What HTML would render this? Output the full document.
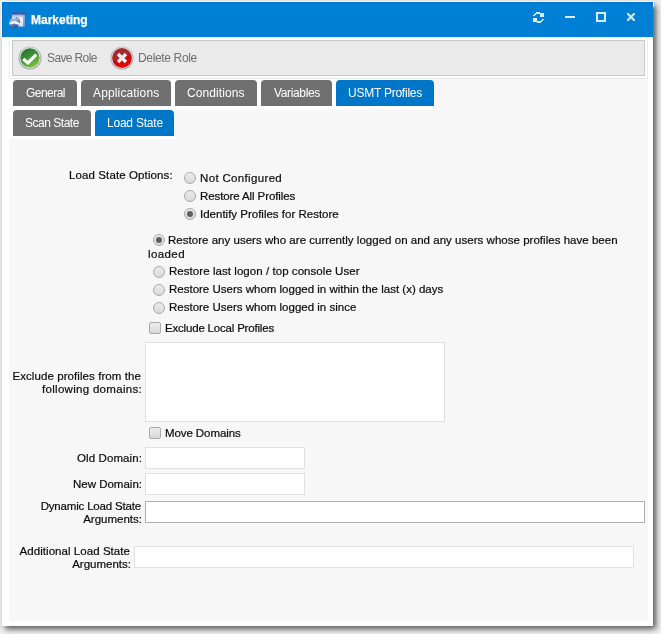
<!DOCTYPE html>
<html><head><meta charset="utf-8">
<style>
*{margin:0;padding:0;box-sizing:border-box}
html,body{width:661px;height:634px;overflow:hidden;background:#f0f0f0}
body{position:relative;font-family:"Liberation Sans",sans-serif;font-size:11.5px;color:#0a0a0a}
.a{position:absolute}
.t{position:absolute;white-space:nowrap;line-height:13px;will-change:transform;-webkit-text-stroke:0.2px #0a0a0a}
.r{text-align:right}
#win{left:2px;top:2px;width:651px;height:624px;background:#fff;box-shadow:3px 3px 6px rgba(0,0,0,0.65)}
#title{left:2px;top:2px;width:651px;height:35px;background:#0080d5;border-top:1px solid #0074cc;border-left:1px solid #0074cc}
#shr{left:653px;top:6px;width:8px;height:628px;background:linear-gradient(to right,#6c6c6c,#8c8c8c 14%,#b4b4b4 45%,#dedede 80%,#ececec)}
#shb{left:6px;top:626px;width:655px;height:8px;background:linear-gradient(to bottom,#6c6c6c,#8c8c8c 14%,#b4b4b4 45%,#dedede 80%,#ececec)}
#frame{left:9px;top:37px;width:639px;height:42px;border:1px solid #ececec;border-bottom-color:#e6e6e6;background:#fff}
#tb{left:12px;top:40px;width:633px;height:36px;border:1px solid #c8c8c8;background:#eaeaea}
#panel{left:9px;top:79px;width:639px;height:542px;background:#f7f7f7}
.tab{position:absolute;height:26px;background:#707070;color:#fff;border-radius:4px 4px 0 0;text-align:center;line-height:27px;font-size:12px;letter-spacing:-0.35px}
.tab.on{background:#0076c8}
.tab span{display:inline-block;will-change:transform}
.wb{position:absolute;background:#fff}
.radio{position:absolute;width:12px;height:12px;border-radius:50%;border:1px solid #a9a9a9;background:linear-gradient(#ececec,#d9d9d9)}
.radio.on::after{content:"";position:absolute;left:2px;top:2px;width:6px;height:6px;border-radius:50%;background:#5e5e5e}
.cb{position:absolute;width:12px;height:12px;border-radius:2px;border:1px solid #a9a9a9;background:linear-gradient(#ededed,#d9d9d9)}
.inp{position:absolute;background:#fff;border:1px solid #e0e0e0}
.tbt{position:absolute;will-change:transform;white-space:nowrap;font-size:12px;letter-spacing:-0.5px;color:#6e6e6e;line-height:13px}
</style></head><body>
<div id="win" class="a"></div>
<div id="title" class="a"></div>
<div class="a" style="left:1px;top:1px;width:653px;height:1px;background:#fbf5ef"></div>
<div class="a" style="left:1px;top:1px;width:1px;height:36px;background:#fbf5ef"></div>
<div class="a" style="left:653px;top:1px;width:1px;height:6px;background:#fbf5ef"></div>
<div class="a" style="left:1px;top:37px;width:1px;height:589px;background:#dcdcdc"></div>
<!-- title icon -->
<svg class="a" style="left:9px;top:11px" width="17" height="17" viewBox="0 0 17 17">
  <defs>
    <linearGradient id="disc" x1="0.2" y1="0" x2="0.5" y2="1"><stop offset="0" stop-color="#c4d4f0"/><stop offset="0.5" stop-color="#7c98d8"/><stop offset="1" stop-color="#30509c"/></linearGradient>
    <linearGradient id="boxg" x1="0" y1="0" x2="0" y2="1"><stop offset="0" stop-color="#3c5aa8"/><stop offset="0.12" stop-color="#3c5aa8"/><stop offset="0.22" stop-color="#a8bce4"/><stop offset="0.45" stop-color="#f2f2f4"/><stop offset="1" stop-color="#dfe3ea"/></linearGradient>
    <linearGradient id="sideg" x1="0" y1="0" x2="0" y2="1"><stop offset="0" stop-color="#2e4c98"/><stop offset="0.3" stop-color="#8aa4d8"/><stop offset="1" stop-color="#5a7cc4"/></linearGradient>
  </defs>
  <rect x="3" y="1.3" width="12.7" height="14.2" fill="url(#boxg)"/>
  <rect x="14.2" y="1.3" width="1.5" height="14.2" fill="url(#sideg)"/>
  <circle cx="5.6" cy="11.6" r="5.2" fill="url(#disc)"/>
  <path d="M0.5 11.4 L5.8 9.8 L10.8 12.1 L10.3 13.9 L5.4 12.6 L0.7 13.5z" fill="#f2f5fc"/>
  <path d="M6.8 6.5 A5.2 5.2 0 0 1 10.8 11.8" stroke="#606060" stroke-width="0.9" fill="none"/>
</svg>
<div class="t" style="left:31px;top:14px;color:#fff;font-weight:bold;font-size:12px;-webkit-text-stroke:0.25px #fff">Marketing</div>
<!-- title buttons -->
<svg class="a" style="left:533px;top:12px" width="11" height="11" viewBox="0 0 11 11" shape-rendering="crispEdges" fill="#d8ecfa">
  <rect x="3" y="0" width="4" height="2"/>
  <rect x="2" y="1" width="2" height="1"/>
  <rect x="1" y="2" width="2" height="1"/>
  <rect x="0" y="3" width="2" height="1"/>
  <rect x="7" y="1" width="4" height="4"/>
  <rect x="0" y="6" width="4" height="4"/>
  <rect x="4" y="9" width="4" height="2"/>
  <rect x="7" y="9" width="2" height="1"/>
  <rect x="8" y="8" width="2" height="1"/>
  <rect x="9" y="7" width="2" height="1"/>
</svg>
<div class="a" style="left:565px;top:16px;width:10px;height:2px;background:#d8ecfa"></div>
<div class="a" style="left:596px;top:12px;width:10px;height:10px;border:2px solid #d8ecfa"></div>
<svg class="a" style="left:627px;top:13px" width="8" height="8" viewBox="0 0 8 8">
  <path d="M0.8 0.8 L7.2 7.2 M7.2 0.8 L0.8 7.2" stroke="#d8ecfa" stroke-width="2" stroke-linecap="square"/>
</svg>

<div id="frame" class="a"></div>
<div id="tb" class="a"></div>
<!-- save icon -->
<svg class="a" style="left:18px;top:46px" width="24" height="24" viewBox="0 0 24 24">
  <defs>
    <linearGradient id="g1" x1="0.2" y1="0" x2="0.8" y2="1"><stop offset="0" stop-color="#236e2c"/><stop offset="0.5" stop-color="#3f9a35"/><stop offset="1" stop-color="#8fca42"/></linearGradient>
    <linearGradient id="r1" x1="0.2" y1="0" x2="0.6" y2="1"><stop offset="0" stop-color="#9c2e2e"/><stop offset="0.5" stop-color="#b02424"/><stop offset="0.56" stop-color="#c40c0c"/><stop offset="1" stop-color="#f40404"/></linearGradient>
    <linearGradient id="ring" x1="0" y1="0" x2="0" y2="1"><stop offset="0" stop-color="#c4c4c8"/><stop offset="1" stop-color="#a6a6ac"/></linearGradient>
  </defs>
  <circle cx="12" cy="12" r="11.6" fill="url(#ring)"/>
  <circle cx="12" cy="12" r="10.4" fill="#ececec"/>
  <circle cx="12" cy="12" r="9.7" fill="url(#g1)"/>
  <path d="M5.2 13 L9.9 16.8 L18.3 8.6" stroke="#fff" stroke-width="3.2" fill="none" stroke-linejoin="miter"/>
</svg>
<div class="tbt" id="s1" style="left:47px;top:52px;letter-spacing:-0.625px">Save Role</div>
<svg class="a" style="left:110px;top:46px" width="24" height="24" viewBox="0 0 24 24">
  <circle cx="12" cy="12" r="11.6" fill="url(#ring)"/>
  <circle cx="12" cy="12" r="10.5" fill="#f0f0f0"/>
  <circle cx="12" cy="12" r="9.9" fill="url(#r1)"/>
  <path d="M9.2 9.2 L14.8 14.8 M14.8 9.2 L9.2 14.8" stroke="#eeeeee" stroke-width="3.4" stroke-linecap="square"/>
</svg>
<div class="tbt" id="s2" style="left:138px;top:52px;letter-spacing:-0.35px">Delete Role</div>

<div id="panel" class="a"></div>
<!-- tabs row 1 -->
<div class="wb" style="left:9px;top:79px;width:68px;height:30px"></div>
<div class="wb" style="left:77px;top:79px;width:94px;height:30px"></div>
<div class="wb" style="left:171px;top:79px;width:86px;height:30px"></div>
<div class="wb" style="left:257px;top:79px;width:75px;height:30px"></div>
<div class="wb" style="left:332px;top:79px;width:102px;height:30px"></div>
<div class="wb" style="left:9px;top:109px;width:82px;height:30px"></div>
<div class="wb" style="left:91px;top:109px;width:83px;height:30px"></div>
<div class="tab" style="left:13px;top:80px;width:64px"><span style="letter-spacing:-0.53px">General</span></div>
<div class="tab" style="left:81px;top:80px;width:90px"><span style="letter-spacing:0.14px">Applications</span></div>
<div class="tab" style="left:175px;top:80px;width:82px"><span style="letter-spacing:0.09px">Conditions</span></div>
<div class="tab" style="left:261px;top:80px;width:71px"><span>Variables</span></div>
<div class="tab on" style="left:336px;top:80px;width:98px"><span style="letter-spacing:-0.24px">USMT Profiles</span></div>
<div class="tab" style="left:13px;top:110px;width:78px"><span style="letter-spacing:-0.48px">Scan State</span></div>
<div class="tab on" style="left:95px;top:110px;width:79px"><span style="letter-spacing:-0.22px">Load State</span></div>

<!-- form -->
<div class="t" id="l1" style="left:69px;top:169px;letter-spacing:0.11px">Load State Options:</div>
<div class="radio" style="left:184px;top:172px"></div>
<div class="t" id="l2" style="left:200px;top:172px;letter-spacing:0.34px">Not Configured</div>
<div class="radio" style="left:184px;top:190px"></div>
<div class="t" id="l3" style="left:200px;top:190px;letter-spacing:-0.1px">Restore All Profiles</div>
<div class="radio on" style="left:184px;top:208px"></div>
<div class="t" id="l4" style="left:200px;top:208px">Identify Profiles for Restore</div>

<div class="radio on" style="left:153px;top:234px"></div>
<div class="t" id="l5" style="left:168px;letter-spacing:0.025px;top:234px">Restore any users who are currently logged on and any users whose profiles have been</div>
<div class="t" id="l6" style="left:148px;top:248px;letter-spacing:0.4px">loaded</div>
<div class="radio" style="left:153px;top:266px"></div>
<div class="t" id="l7" style="left:169px;top:265px;letter-spacing:0.055px">Restore last logon / top console User</div>
<div class="radio" style="left:153px;top:284px"></div>
<div class="t" id="l8" style="left:169px;top:283px">Restore Users whom logged in within the last (x) days</div>
<div class="radio" style="left:153px;top:302px"></div>
<div class="t" id="l9" style="left:169px;top:301px">Restore Users whom logged in since</div>
<div class="cb" style="left:149px;top:322px"></div>
<div class="t" id="l10" style="left:165px;top:322px;letter-spacing:-0.19px">Exclude Local Profiles</div>

<div class="t r" id="l11" style="left:0;width:141px;top:370px;letter-spacing:0.08px">Exclude profiles from the</div>
<div class="t r" id="l12" style="left:0;width:142px;top:383px;letter-spacing:0.3px">following domains:</div>
<div class="inp" style="left:145px;top:342px;width:300px;height:80px"></div>
<div class="cb" style="left:149px;top:427px"></div>
<div class="t" id="l13" style="left:165px;top:427px;letter-spacing:-0.09px">Move Domains</div>

<div class="t r" id="l14" style="left:0;width:142px;top:452px;letter-spacing:0.1px">Old Domain:</div>
<div class="inp" style="left:145px;top:447px;width:160px;height:22px"></div>
<div class="t r" id="l15" style="left:0;width:142px;top:478px">New Domain:</div>
<div class="inp" style="left:145px;top:473px;width:160px;height:22px"></div>
<div class="t r" id="l16" style="left:0;width:141px;top:500px;letter-spacing:-0.18px">Dynamic Load State</div>
<div class="t r" id="l17" style="left:0;width:142px;top:513px">Arguments:</div>
<div class="inp" style="left:145px;top:501px;width:500px;height:22px;border-color:#adadad"></div>
<div class="t r" id="l18" style="left:0;width:130px;top:545px;letter-spacing:0.05px">Additional Load State</div>
<div class="t r" id="l19" style="left:0;width:131px;top:558px">Arguments:</div>
<div class="inp" style="left:134px;top:546px;width:500px;height:22px;border-color:#e2e2e2"></div>
</body></html>
